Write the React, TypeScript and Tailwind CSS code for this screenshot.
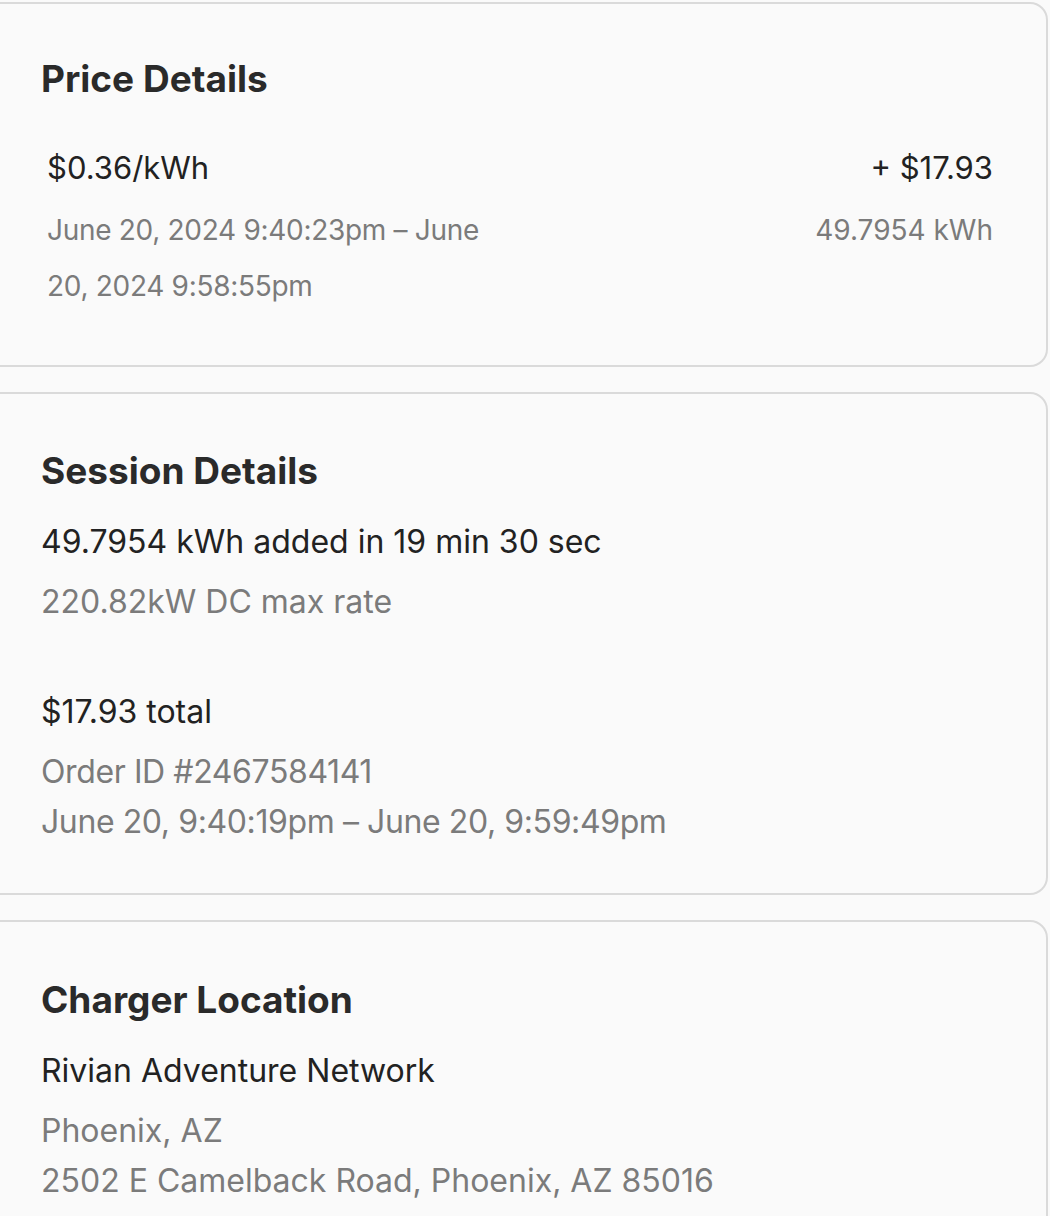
import React from "react";

const font = { fontFamily: "Inter, 'Noto Sans', sans-serif" };

function Heading({ children }: { children: React.ReactNode }) {
  return (
    <h2 className="text-[37px] leading-[46px] font-bold text-[#2a2a2a]">
      {children}
    </h2>
  );
}

export default function App() {
  return (
    <div className="min-h-screen bg-[#fafafa] overflow-hidden" style={font}>
      <div className="flex flex-col gap-[25px] pt-[2px] -ml-[20px] w-[1068px]">
        {/* Price Details */}
        <section className="border-2 border-[#dadada] rounded-[18px] pt-[52px] pb-[51px] pl-[59px] pr-[53px]">
          <Heading>Price Details</Heading>
          <div className="flex pt-[41px] pl-[6px]">
            <div className="w-1/2">
              <div className="text-[31px] leading-[50px] text-[#222222]">$0.36/kWh</div>
              <div className="text-[28px] leading-[56px] text-[#7b7b7b] mt-[9px] tracking-[-0.3px]">
                June 20, 2024 9:40:23pm – June 20, 2024 9:58:55pm
              </div>
            </div>
            <div className="w-1/2 text-right">
              <div className="text-[31px] leading-[50px] text-[#222222]">+ $17.93</div>
              <div className="text-[28px] leading-[56px] text-[#7b7b7b] mt-[9px]">49.7954 kWh</div>
            </div>
          </div>
        </section>

        {/* Session Details */}
        <section className="border-2 border-[#dadada] rounded-[18px] pt-[54px] pb-[46px] pl-[59px] pr-[53px]">
          <Heading>Session Details</Heading>
          <div className="mt-[23px] text-[32px] leading-[50px] text-[#222222]">
            49.7954 kWh added in 19 min 30 sec
          </div>
          <div className="mt-[10px] text-[32px] leading-[50px] text-[#7b7b7b]">220.82kW DC max rate</div>
          <div className="mt-[60px] text-[32px] leading-[50px] text-[#222222]">$17.93 total</div>
          <div className="mt-[10px] text-[32px] leading-[50px] text-[#7b7b7b] tracking-[-0.4px]">
            <div>Order ID #2467584141</div>
            <div>June 20, 9:40:19pm – June 20, 9:59:49pm</div>
          </div>
        </section>

        {/* Charger Location */}
        <section className="border-2 border-[#dadada] rounded-[18px] pt-[55px] pb-[60px] pl-[59px] pr-[53px]">
          <Heading>Charger Location</Heading>
          <div className="mt-[23px] text-[32px] leading-[50px] text-[#222222]">Rivian Adventure Network</div>
          <div className="mt-[10px] text-[32px] leading-[50px] text-[#7b7b7b]">
            <div>Phoenix, AZ</div>
            <div>2502 E Camelback Road, Phoenix, AZ 85016</div>
          </div>
        </section>
      </div>
    </div>
  );
}
